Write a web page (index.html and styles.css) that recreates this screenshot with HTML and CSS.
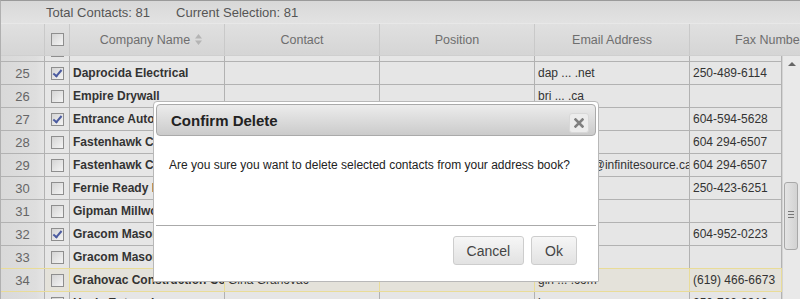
FILE: index.html
```html
<!DOCTYPE html>
<html lang="en">
<head>
    <meta charset="UTF-8">
    <title>Address Book</title>
    <link rel="stylesheet" href="styles.css">
</head>
<body>
    <div class="grid">
        <div class="status-bar">
            <span>Total Contacts: 81</span>
            <span>Current Selection: 81</span>
        </div>
        <div class="grid-head">
            <div class="hcell"></div>
            <div class="hcell"><span class="check"></span></div>
            <div class="hcell sortable">Company Name
                <svg class="sort" width="7" height="11" viewBox="0 0 7 11"><path d="M0 4.5L3.5 0L7 4.5Z M0 6.5L3.5 11L7 6.5Z" fill="#b4b4b4"/></svg>
            </div>
            <div class="hcell">Contact</div>
            <div class="hcell">Position</div>
            <div class="hcell">Email Address</div>
            <div class="hcell">Fax Number</div>
        </div>
        <div class="grid-body">
            <div class="rows">
                <div class="row row-partial">
                    <div class="cell num">24</div>
                    <div class="cell box"><span class="check"></span></div>
                    <div class="cell name">Cuuta Ltd</div>
                    <div class="cell"></div>
                    <div class="cell"></div>
                    <div class="cell"></div>
                    <div class="cell"></div>
                </div>
                <div class="row">
                    <div class="cell num">25</div>
                    <div class="cell box"><span class="check checked"></span></div>
                    <div class="cell name">Daprocida Electrical</div>
                    <div class="cell"></div>
                    <div class="cell"></div>
                    <div class="cell">dap ... .net</div>
                    <div class="cell">250-489-6114</div>
                </div>
                <div class="row">
                    <div class="cell num">26</div>
                    <div class="cell box"><span class="check"></span></div>
                    <div class="cell name">Empire Drywall</div>
                    <div class="cell"></div>
                    <div class="cell"></div>
                    <div class="cell">bri ... .ca</div>
                    <div class="cell"></div>
                </div>
                <div class="row">
                    <div class="cell num">27</div>
                    <div class="cell box"><span class="check checked"></span></div>
                    <div class="cell name">Entrance Automotive</div>
                    <div class="cell"></div>
                    <div class="cell"></div>
                    <div class="cell"></div>
                    <div class="cell">604-594-5628</div>
                </div>
                <div class="row">
                    <div class="cell num">28</div>
                    <div class="cell box"><span class="check"></span></div>
                    <div class="cell name">Fastenhawk Coquitlam</div>
                    <div class="cell"></div>
                    <div class="cell"></div>
                    <div class="cell"></div>
                    <div class="cell">604 294-6507</div>
                </div>
                <div class="row">
                    <div class="cell num">29</div>
                    <div class="cell box"><span class="check"></span></div>
                    <div class="cell name">Fastenhawk Coquitlam</div>
                    <div class="cell"></div>
                    <div class="cell"></div>
                    <div class="cell">fastenhaw@infinitesource.ca</div>
                    <div class="cell">604 294-6507</div>
                </div>
                <div class="row">
                    <div class="cell num">30</div>
                    <div class="cell box"><span class="check"></span></div>
                    <div class="cell name">Fernie Ready Mix</div>
                    <div class="cell"></div>
                    <div class="cell"></div>
                    <div class="cell"></div>
                    <div class="cell">250-423-6251</div>
                </div>
                <div class="row">
                    <div class="cell num">31</div>
                    <div class="cell box"><span class="check"></span></div>
                    <div class="cell name">Gipman Millwork</div>
                    <div class="cell"></div>
                    <div class="cell"></div>
                    <div class="cell"></div>
                    <div class="cell"></div>
                </div>
                <div class="row">
                    <div class="cell num">32</div>
                    <div class="cell box"><span class="check checked"></span></div>
                    <div class="cell name">Gracom Masonry</div>
                    <div class="cell"></div>
                    <div class="cell"></div>
                    <div class="cell"></div>
                    <div class="cell">604-952-0223</div>
                </div>
                <div class="row">
                    <div class="cell num">33</div>
                    <div class="cell box"><span class="check"></span></div>
                    <div class="cell name">Gracom Masonry</div>
                    <div class="cell"></div>
                    <div class="cell"></div>
                    <div class="cell"></div>
                    <div class="cell"></div>
                </div>
                <div class="row row-hover">
                    <div class="cell num">34</div>
                    <div class="cell box"><span class="check"></span></div>
                    <div class="cell name">Grahovac Construction Corp</div>
                    <div class="cell">Gina Grahovac</div>
                    <div class="cell"></div>
                    <div class="cell">gin ... .com</div>
                    <div class="cell">(619) 466-6673</div>
                </div>
                <div class="row">
                    <div class="cell num">35</div>
                    <div class="cell box"><span class="check"></span></div>
                    <div class="cell name">Heale Enterprises</div>
                    <div class="cell"></div>
                    <div class="cell"></div>
                    <div class="cell">bu ... .ca</div>
                    <div class="cell">250-762-3310</div>
                </div>
            </div>
            <div class="scrollbar">
                <span class="arrow-up"></span>
                <span class="thumb"></span>
            </div>
        </div>

        <div class="dialog">
            <div class="dialog-title">
                <span>Confirm Delete</span>
                <button class="close-btn">
                    <svg width="10" height="10" viewBox="0 0 10 10"><path d="M1.5 1.5L8.5 8.5M8.5 1.5L1.5 8.5" stroke="#808080" stroke-width="2.6" stroke-linecap="square"/></svg>
                </button>
            </div>
            <div class="dialog-body">Are you sure you want to delete selected contacts from your address book?</div>
            <div class="dialog-buttons">
                <button class="btn">Cancel</button>
                <button class="btn">Ok</button>
            </div>
        </div>
    </div>
</body>
</html>
```

FILE: styles.css
```css
body {
    margin: 0;
    font-family: 'Liberation Sans', Arial, sans-serif;
    overflow: hidden;
    background-color: #e6e6e6;
}
.grid {
    position: relative;
    width: 800px;
    height: 299px;
    overflow: hidden;
    border-top: 1px solid #9a9a9a;
    border-left: 1px solid #b0b0b0;
    box-sizing: border-box;
}
.status-bar {
    height: 22px;
    display: flex;
    align-items: center;
    gap: 26px;
    padding-left: 45px;
    font-size: 13px;
    color: #555;
    background: linear-gradient(#d8d8d8, #e2e2e2);
    border-bottom: 1px solid #e8e8e8;
}
.grid-head {
    display: grid;
    grid-template-columns: 44px 25px 155px 155px 155px 155px 160px;
    height: 31px;
    background: linear-gradient(#e0e0e0, #d5d5d5);
    border-bottom: 1px solid #cfcfcf;
}
.hcell {
    display: flex;
    align-items: center;
    justify-content: center;
    font-size: 12.5px;
    color: #6e6e6e;
    border-right: 1px solid #c9c9c9;
    white-space: nowrap;
    overflow: hidden;
    gap: 5px;
}
.hcell.sortable {
    padding-left: 8px;
}
.grid-body {
    display: flex;
    height: 244px;
    overflow: hidden;
}
.rows {
    width: 781px;
}
.row {
    display: grid;
    grid-template-columns: 44px 25px 155px 155px 155px 155px 92px;
    height: 23px;
    border-bottom: 1px solid #b2b2b2;
    box-sizing: border-box;
    font-size: 12px;
    color: #333;
}
.row-partial {
    margin-top: -17px;
}
.cell {
    display: flex;
    align-items: center;
    padding: 0 3px;
    border-right: 1px solid #b2b2b2;
    white-space: nowrap;
    overflow: hidden;
}
.cell.num {
    justify-content: center;
    font-size: 13px;
    color: #666;
    background: linear-gradient(to right, #d9d9d9, #dedede 80%, #e4e4e4);
}
.cell.box {
    justify-content: center;
    padding: 0;
}
.cell.name {
    font-weight: bold;
}
.row-hover {
    background-color: #e4e2da;
    border-bottom-color: #e9dc98;
    box-shadow: 0 -1px 0 #e9dc98;
}
.row-hover .cell {
    border-right-color: #e9dc98;
}
.row-hover .cell.num {
    border-right-color: #b2b2b2;
}
.check {
    display: inline-block;
    width: 11px;
    height: 11px;
    border: 1px solid #8e8e8e;
    background: linear-gradient(135deg, #d4d4d4, #f4f4f4);
    position: relative;
}
.check.checked::after {
    content: '';
    position: absolute;
    left: 3px;
    top: 0;
    width: 3px;
    height: 7px;
    border: solid #4b5ba0;
    border-width: 0 2px 2px 0;
    transform: rotate(40deg);
}
.scrollbar {
    width: 18px;
    position: relative;
    background-color: #e9e9e9;
    border-left: 1px solid #d4d4d4;
}
.arrow-up {
    position: absolute;
    left: 5px;
    top: 6px;
    border: 4px solid transparent;
    border-bottom: 4px solid #666;
    border-top: 0;
}
.thumb {
    position: absolute;
    left: 1px;
    top: 126px;
    width: 12px;
    height: 66px;
    border: 1px solid #a8a8a8;
    border-radius: 3px;
    background: linear-gradient(to right, #e4e4e4, #d2d2d2);
}
.thumb::after {
    content: '';
    position: absolute;
    left: 3px;
    top: 28px;
    width: 6px;
    height: 7px;
    background: repeating-linear-gradient(#777 0 1px, transparent 1px 3px);
}
.dialog {
    position: absolute;
    left: 152px;
    top: 100px;
    width: 446px;
    height: 181px;
    box-sizing: border-box;
    background-color: #fff;
    border: 1px solid #b8b8b8;
    border-radius: 4px 4px 0 0;
    padding: 2px;
    display: flex;
    flex-direction: column;
}
.dialog-title {
    height: 32px;
    box-sizing: border-box;
    display: flex;
    align-items: center;
    justify-content: space-between;
    padding: 0 6px 0 14px;
    border: 1px solid #aaa;
    border-radius: 4px;
    background: linear-gradient(#ececec, #cbcbcb);
    font-size: 15px;
    font-weight: bold;
    color: #222;
}
.close-btn {
    width: 20px;
    height: 20px;
    padding: 0;
    display: flex;
    align-items: center;
    justify-content: center;
    border: 1px solid #d8d8d8;
    border-radius: 3px;
    background-color: #ececec;
    margin-top: 5px;
}
.dialog-body {
    height: 90px;
    box-sizing: border-box;
    padding: 22px 0 0 13px;
    font-size: 12px;
    color: #222;
    border-bottom: 1px solid #aaa;
}
.dialog-buttons {
    display: flex;
    justify-content: flex-end;
    gap: 7px;
    padding: 10px 19px 0 0;
}
.btn {
    height: 29px;
    padding: 0 13px;
    font-family: 'Liberation Sans', Arial, sans-serif;
    font-size: 14px;
    color: #444;
    border: 1px solid #cdcdcd;
    border-radius: 3px;
    background: linear-gradient(#f6f6f6, #e2e2e2);
}
```
